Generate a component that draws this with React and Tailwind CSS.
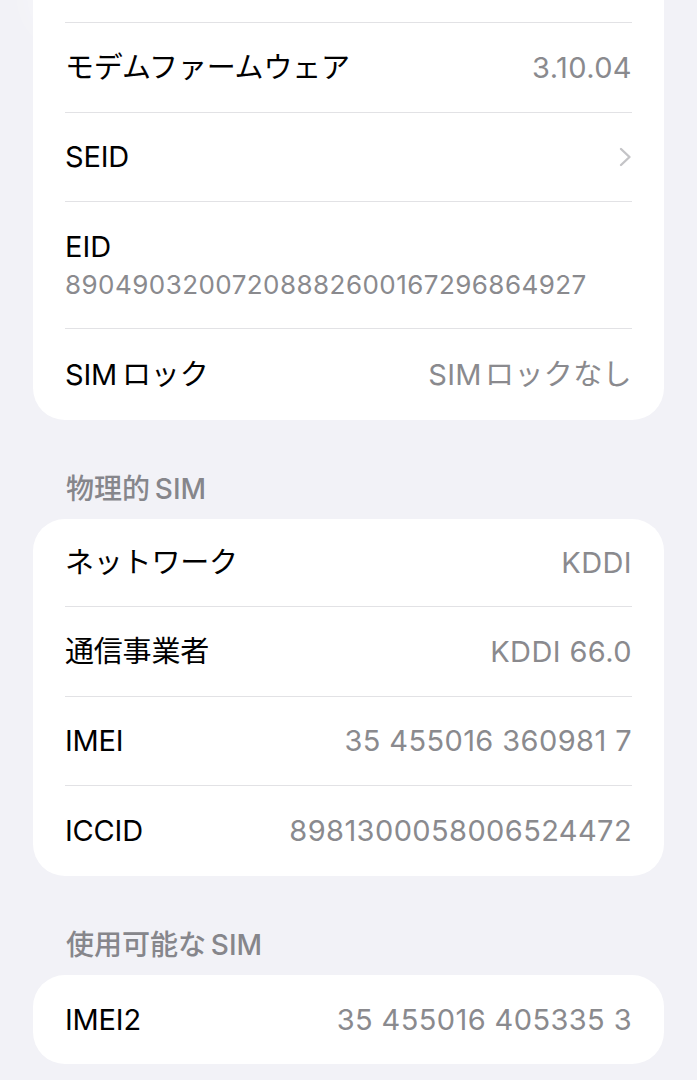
import React from "react";

const font = { fontFamily: '"Inter", "Noto Sans CJK JP", sans-serif' };

const Chevron = () => (
  <svg width="13" height="20" viewBox="0 0 13 20" fill="none">
    <path d="M2 2l8.5 8L2 18" stroke="#c4c4c7" strokeWidth="2.4" strokeLinecap="round" strokeLinejoin="round" />
  </svg>
);

const Row = ({ label, value, chevron, h = "h-[89px]", last }) => (
  <div className={`flex items-center justify-between ${h} ${last ? "" : "border-b border-[#e2e2e5]"}`}>
    <span className="text-[29px] text-black tracking-[-0.2px]">{label}</span>
    {value && <span className="text-[29px] text-[#8a8a8e] tracking-[0.4px]">{value}</span>}
    {chevron && <Chevron />}
  </div>
);

const Header = ({ children }) => (
  <div className="pt-[54px] pb-[15px] px-[33px] text-[28px] leading-[30px] font-medium text-[#86868b]">
    {children}
  </div>
);

export default function App() {
  return (
    <div className="relative min-h-screen bg-[#f2f2f7] px-[33px] overflow-hidden" style={font}>
      <div className="absolute left-[40px] top-[-30px] w-[110px] h-[55px] rounded-full bg-white/80 blur-xl" />

      <div className="relative bg-white rounded-b-[32px]">
        <div className="mx-[32px]">
          <div className="h-[23px] border-b border-[#e2e2e5]" />
          <Row label="モデムファームウェア" value="3.10.04" h="h-[90px]" />
          <Row label="SEID" chevron />
          <div className="h-[127px] flex flex-col justify-center border-b border-[#e2e2e5]">
            <span className="text-[29px] leading-[40px] text-black">EID</span>
            <span className="text-[26px] leading-[36px] text-[#8a8a8e] tracking-[0.45px]">
              89049032007208882600167296864927
            </span>
          </div>
          <Row label={"SIM\u2009ロック"} value={"SIM\u200aロックなし"} h="h-[91px]" last />
        </div>
      </div>

      <Header>{"物理的\u2009SIM"}</Header>
      <div className="bg-white rounded-[32px]">
        <div className="mx-[32px]">
          <Row label="ネットワーク" value="KDDI" h="h-[88px]" />
          <Row label="通信事業者" value="KDDI 66.0" h="h-[90px]" />
          <Row label="IMEI" value="35 455016 360981 7" h="h-[89px]" />
          <Row label="ICCID" value="8981300058006524472" h="h-[90px]" last />
        </div>
      </div>

      <Header>{"使用可能な\u2009SIM"}</Header>
      <div className="bg-white rounded-[32px]">
        <div className="mx-[32px]">
          <Row label="IMEI2" value="35 455016 405335 3" h="h-[89px]" last />
        </div>
      </div>
    </div>
  );
}
